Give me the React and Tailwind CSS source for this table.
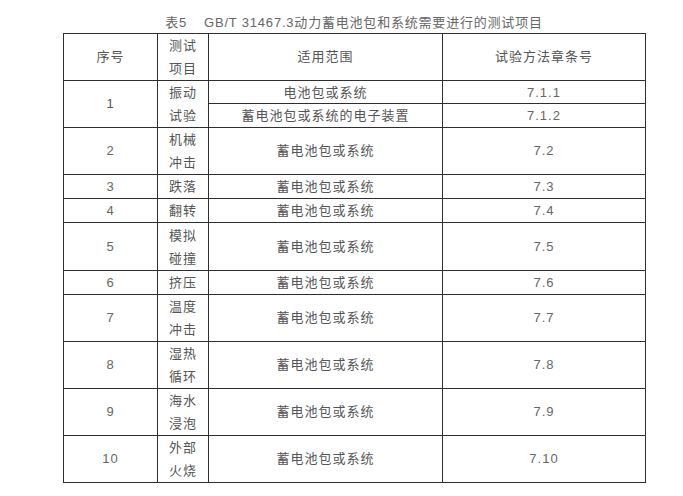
import React from 'react';

const rows = [
  { no: '2', item: ['机械', '冲击'], h: 'h-[47px]', ref: '7.2' },
  { no: '3', item: ['跌落'], h: 'h-[24px]', ref: '7.3' },
  { no: '4', item: ['翻转'], h: 'h-[24px]', ref: '7.4' },
  { no: '5', item: ['模拟', '碰撞'], h: 'h-[48px]', ref: '7.5' },
  { no: '6', item: ['挤压'], h: 'h-[22px]', ref: '7.6' },
  { no: '7', item: ['温度', '冲击'], h: 'h-[47px]', ref: '7.7' },
  { no: '8', item: ['湿热', '循环'], h: 'h-[47px]', ref: '7.8' },
  { no: '9', item: ['海水', '浸泡'], h: 'h-[46px]', ref: '7.9' },
  { no: '10', item: ['外部', '火烧'], h: 'h-[47px]', ref: '7.10' },
];

const cell = 'border border-[#2e2e2e] p-0 text-center align-middle';

const App = () => {
  return (
    <div
      className="w-[683px] h-[496px] bg-white text-[#555] pt-[14px]"
      style={{ fontFamily: '"Liberation Sans", "Noto Sans CJK SC", sans-serif' }}
    >
      <div className="ml-[63px] w-[582px] text-center text-[13px] leading-[18px] text-[#666] tracking-[0.8px]">
        表5<span className="inline-block w-[17px]" />GB/T 31467.3动力蓄电池包和系统需要进行的测试项目
      </div>
      <table className="ml-[63px] mt-[1px] border-collapse table-fixed w-[582px] text-[13px] tracking-[1px]">
        <colgroup>
          <col className="w-[94px]" />
          <col className="w-[51px]" />
          <col className="w-[234px]" />
          <col className="w-[203px]" />
        </colgroup>
        <tbody>
          <tr className="h-[47px]">
            <td className={cell}>序号</td>
            <td className={`${cell} leading-[23px]`}>
              测试<br />项目
            </td>
            <td className={cell}>适用范围</td>
            <td className={cell}>试验方法章条号</td>
          </tr>
          <tr className="h-[23px]">
            <td className={cell} rowSpan={2}>1</td>
            <td className={`${cell} leading-[23px]`} rowSpan={2}>
              振动<br />试验
            </td>
            <td className={`${cell} leading-[21px]`}>电池包或系统</td>
            <td className={`${cell} leading-[21px] text-[#666]`}>7.1.1</td>
          </tr>
          <tr className="h-[24px]">
            <td className={`${cell} leading-[22px]`}>蓄电池包或系统的电子装置</td>
            <td className={`${cell} leading-[22px] text-[#666]`}>7.1.2</td>
          </tr>
          {rows.map((r) => (
            <tr key={r.no} className={r.h}>
              <td className={`${cell} text-[#666]`}>{r.no}</td>
              <td className={`${cell} leading-[23px]`}>
                {r.item.map((t, i) => (
                  <React.Fragment key={t}>
                    {i > 0 && <br />}
                    {t}
                  </React.Fragment>
                ))}
              </td>
              <td className={`${cell} leading-[20px]`}>蓄电池包或系统</td>
              <td className={`${cell} leading-[20px] text-[#666]`}>{r.ref}</td>
            </tr>
          ))}
        </tbody>
      </table>
    </div>
  );
};

export default App;
